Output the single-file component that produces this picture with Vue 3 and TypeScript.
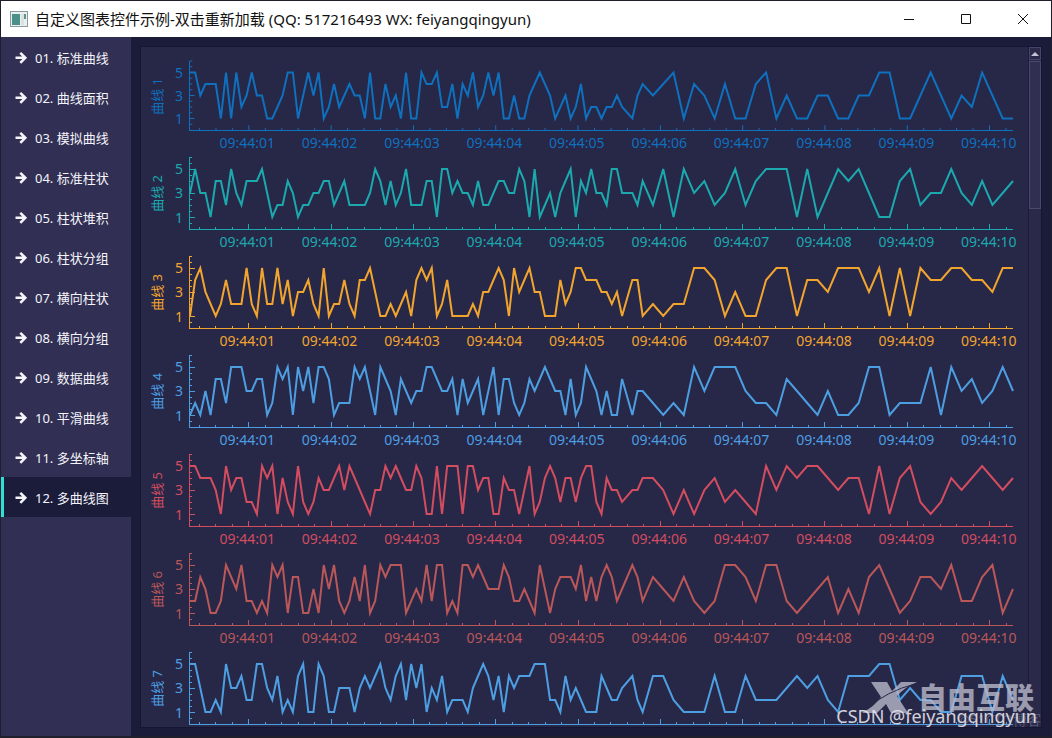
<script setup lang="ts">
import { ref } from 'vue'

interface Series {
  name: string
  color: string
  dense: string
  sparse: string
}

const menu: string[] = [
  '01. 标准曲线', '02. 曲线面积', '03. 模拟曲线', '04. 标准柱状',
  '05. 柱状堆积', '06. 柱状分组', '07. 横向柱状', '08. 横向分组',
  '09. 数据曲线', '10. 平滑曲线', '11. 多坐标轴', '12. 多曲线图',
]
const active = ref(11)

// One digit per sample; a dot means no sample was taken at that step.
const series: Series[] = [
  {
    name: '曲线 1', color: '#0f70bd',
    dense: '5534441515' + '2353311235' + '5135351242' + '3433151142' + '3151154452' + '2414352353' + '5113113454' + '3123124122' + '12232.134',
    sparse: '3451431411' + '4513113311' + '3355113531' + '325311',
  },
  {
    name: '曲线 2', color: '#1ca9ad',
    dense: '3533144253' + '2444531224' + '3122334423' + '4222235424' + '2352224415' + '5343324223' + '4433541512' + '3134514353' + '325533324',
    sparse: '2515342352' + '4555151354' + '5311452335' + '324234',
  },
  {
    name: '曲线 3', color: '#f2a52e',
    dense: '1453212422' + '2521522524' + '1334215122' + '4214453112' + '1231454512' + '4111121334' + '5415345331' + '1142355444' + '33231.441',
    sparse: '2122554131' + '1455144355' + '5351515445' + '544355',
  },
  {
    name: '曲线 4', color: '#4d9ee0',
    dense: '1213144255' + '5334412545' + '1535255412' + '2254531543' + '1432335543' + '3414234135' + '1442124345' + '4331412543' + '13114.133',
    sparse: '2121535553' + '2214321311' + '2551222515' + '342353',
  },
  {
    name: '曲线 5', color: '#d24d5f',
    dense: '5544431534' + '4221545142' + '1521243345' + '3543213354' + '5433541151' + '5551553441' + '1433135124' + '5424424552' + '14332.334',
    sparse: '4313134232' + '1535455434' + '4151452124' + '345434',
  },
  {
    name: '曲线 6', color: '#b95759',
    dense: '2243112543' + '5221215451' + '4411315352' + '1242512545' + '5512325255' + '1215545433' + '3542232153' + '1344435242' + '454234542',
    sparse: '4324212554' + '2552123413' + '1453124435' + '224513',
  },
  {
    name: '曲线 7', color: '#4d9fe2',
    dense: '5531121533' + '4225532412' + '1451154113' + '3313434532' + '4525351324' + '1222134542' + '4143444555' + '2214232111' + '43223.421',
    sparse: '4421114114' + '2223434214' + '4455232211' + '444142',
  },
]

const times: string[] = Array.from({ length: 10 }, (_, i) => '09:44:' + String(i + 1).padStart(2, '0'))

// Horizontal units are milliseconds, vertical units are twelfths of a level.
function linePoints(s: Series): string {
  const out: string[] = []
  const add = (step: number, v: string) => {
    if (v !== '.') out.push(`${step * 62.5},${72 - Number(v) * 12}`)
  }
  for (let i = 0; i < s.dense.length; i++) add(i, s.dense[i])
  for (let i = 0; i < s.sparse.length; i++) add(90 + i * 2, s.sparse[i])
  return out.join(' ')
}

function tickPath(): string {
  let d = ''
  for (let i = 0; i < 50; i++) {
    d += `M${115 + i * 200} 72v${i % 5 === 3 ? -5 : -2}`
  }
  for (let i = 1; i <= 12; i++) {
    const major = i === 2 || i === 6 || i === 10
    d += `M0 ${72 - i * 6}h${major ? 55 : 28}`
  }
  return d
}
const ticks = tickPath()
</script>

<template>
  <div class="window">
    <header class="titlebar">
      <svg class="app-icon" viewBox="0 0 18 16" aria-hidden="true">
        <rect x="0.5" y="0.5" width="17" height="15" fill="#e9efef" stroke="#8d9a9c" />
        <rect x="2" y="3" width="8" height="11" fill="#4a9088" />
        <rect x="11" y="3" width="3" height="11" fill="#d7e2e2" />
        <rect x="14" y="3" width="2" height="5" fill="#6d8c8c" />
      </svg>
      <h1>自定义图表控件示例-双击重新加载 (QQ: 517216493 WX: feiyangqingyun)</h1>
      <div class="controls">
        <button type="button" aria-label="最小化">
          <svg viewBox="0 0 12 12"><path d="M1 6.5h10" /></svg>
        </button>
        <button type="button" aria-label="最大化">
          <svg viewBox="0 0 12 12"><path d="M1.5 1.5h9v9h-9z" /></svg>
        </button>
        <button type="button" aria-label="关闭">
          <svg viewBox="0 0 12 12"><path d="M1 1l10 10M11 1L1 11" /></svg>
        </button>
      </div>
    </header>

    <div class="body">
      <nav class="sidebar">
        <button
          v-for="(item, i) in menu"
          :key="item"
          type="button"
          :class="['item', { active: i === active }]"
          @click="active = i"
        >
          <svg viewBox="0 0 12 12" aria-hidden="true">
            <path d="M0.5 6.8H10M5.3 1.8L10.3 6.8L5.3 11.8" />
          </svg>
          <span>{{ item }}</span>
        </button>
      </nav>

      <main class="main">
        <section class="panel">
          <div class="charts">
            <figure v-for="(s, n) in series" :key="s.name" class="chart" :style="{ color: s.color }">
              <figcaption>{{ s.name }}</figcaption>
              <div class="levels"><span>5</span><span>3</span><span>1</span></div>
              <svg class="plot" viewBox="0 0 10000 72" preserveAspectRatio="none" aria-hidden="true">
                <path class="ticks" :d="ticks" />
                <polyline class="line" :points="linePoints(s)" />
              </svg>
              <div v-if="n < series.length - 1" class="times">
                <span v-for="t in times" :key="t">{{ t }}</span>
              </div>
            </figure>
          </div>
          <div class="scrollbar">
            <button type="button" class="up" aria-label="向上滚动">
              <svg viewBox="0 0 8 4"><path d="M0 4L4 0L8 4z" /></svg>
            </button>
            <div class="thumb"></div>
          </div>
        </section>
      </main>
    </div>

    <div class="brand">
      <svg viewBox="0 0 56 34" aria-hidden="true">
        <path d="M9 1H25L30 10L39 1H55Q43 6 35 15L46 32H29L24 23L15 32H0Q13 25 19 16Z" />
        <path class="swoosh" d="M4 28Q25 10 53 3" />
      </svg>
      <span>自由互联</span>
    </div>
    <div class="blog">@51CTO博客</div>
    <div class="author">CSDN @feiyangqingyun</div>
  </div>
</template>

<style>
body {
  background: #1b1c2c;
}
</style>

<style scoped>
.window {
  position: relative;
  display: flex;
  flex-direction: column;
  box-sizing: border-box;
  height: 100vh;
  border: 1px solid #20202c;
  border-bottom-width: 2px;
  overflow: hidden;
  background: #1b1c3a;
  font-family: "Noto Sans", "Noto Sans CJK SC", sans-serif;
  font-size: 13px;
}
button {
  margin: 0;
  padding: 0;
  border: 0;
  background: none;
  color: inherit;
  font: inherit;
}
.titlebar {
  display: flex;
  align-items: center;
  flex: none;
  height: 36px;
  padding-left: 9px;
  background: #fff;
  color: #111;
}
.app-icon {
  width: 18px;
  height: 16px;
}
h1 {
  margin: 0 0 0 7px;
  font-size: 15px;
  font-weight: 400;
  line-height: 20px;
  white-space: nowrap;
}
.controls {
  display: flex;
  margin-left: auto;
}
.controls button {
  display: flex;
  align-items: center;
  justify-content: center;
  width: 57px;
  height: 36px;
}
.controls svg {
  width: 12px;
  height: 12px;
  fill: none;
  stroke: #111;
}
.body {
  display: flex;
  flex: 1;
  min-height: 0;
}
.sidebar {
  flex: none;
  width: 130px;
  background: #312f53;
}
.item {
  display: flex;
  align-items: center;
  gap: 8px;
  box-sizing: border-box;
  width: 100%;
  height: 40px;
  padding-left: 11px;
  border-left: 3px solid transparent;
  color: #f4f4fa;
  white-space: nowrap;
}
.item.active {
  border-left-color: #2ee0da;
  background: #1b1c3a;
}
.item svg {
  width: 12px;
  height: 12px;
  fill: none;
  stroke: currentColor;
  stroke-width: 2.6;
  overflow: visible;
}
.main {
  display: flex;
  flex: 1;
  min-width: 0;
  padding: 9px 9px 8px;
}
.panel {
  display: flex;
  flex: 1;
  min-width: 0;
  border: 1px solid #151634;
  background: #272748;
}
.charts {
  flex: 1;
  min-width: 0;
  padding: 14px 15px 0 8px;
  overflow: hidden;
}
.chart {
  display: grid;
  grid-template-columns: 16px 18px 1fr;
  grid-template-rows: 73px 26px;
  margin: 0;
}
.chart:first-child {
  grid-template-rows: 70px 26px;
}
figcaption {
  align-self: center;
  justify-self: center;
  line-height: 16px;
  white-space: nowrap;
  writing-mode: vertical-rl;
  text-orientation: sideways;
  transform: rotate(180deg);
}
.levels {
  display: flex;
  flex-direction: column;
  font-size: 14px;
}
.levels span {
  display: flex;
  flex: 1;
  align-items: center;
  justify-content: flex-end;
  line-height: 16px;
}
.plot {
  box-sizing: border-box;
  width: calc(100% - 6px);
  height: 100%;
  margin-left: 6px;
  border-bottom: 1px solid currentColor;
  border-left: 1px solid currentColor;
  overflow: visible;
}
.plot path,
.plot polyline {
  fill: none;
  stroke: currentColor;
  vector-effect: non-scaling-stroke;
}
.plot .ticks {
  stroke-width: 1;
  shape-rendering: crispEdges;
}
.plot .line {
  stroke-width: 2;
}
.times {
  display: grid;
  grid-column: 3;
  grid-template-columns: repeat(10, minmax(0, 1fr));
  margin-right: -17px;
  margin-left: 23px;
  font-size: 14px;
}
.times span {
  line-height: 24px;
  text-align: center;
}
.scrollbar {
  flex: none;
  width: 12px;
  border-left: 1px solid #1b1c3a;
  background: #2a294a;
}
.up {
  display: flex;
  align-items: center;
  justify-content: center;
  box-sizing: border-box;
  width: 100%;
  height: 13px;
  border: 1px solid #45446a;
}
.up svg {
  width: 8px;
  height: 4px;
  fill: #c4c4d6;
}
.thumb {
  box-sizing: border-box;
  height: 148px;
  margin-top: 1px;
  border: 1px solid #4a496c;
  background: #302f52;
}
.brand {
  position: absolute;
  right: 17px;
  bottom: 21px;
  display: flex;
  align-items: center;
  color: #b9b9cb;
  opacity: 0.8;
}
.brand svg {
  width: 56px;
  height: 34px;
  fill: currentColor;
}
.brand .swoosh {
  fill: none;
  stroke: #272748;
}
.brand span {
  font-size: 29px;
  font-weight: 900;
  line-height: 32px;
}
.blog {
  position: absolute;
  right: 10px;
  bottom: 8px;
  color: #9a9aae;
  font-size: 14px;
  line-height: 16px;
  opacity: 0.4;
}
.author {
  position: absolute;
  right: 14px;
  bottom: 8px;
  color: #e4e4ec;
  font-size: 18px;
  line-height: 24px;
  opacity: 0.9;
}
</style>
